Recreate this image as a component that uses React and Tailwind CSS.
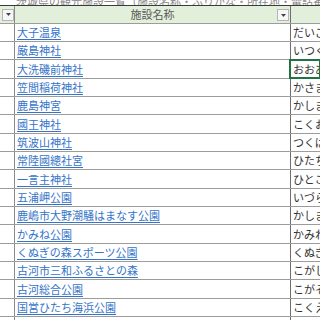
const facilities = [
  { name: '大子温泉', kana: 'だいごおんせん' },
  { name: '厳島神社', kana: 'いつくしまじんじゃ' },
  { name: '大洗磯前神社', kana: 'おおあらいいそさきじんじゃ', selected: true },
  { name: '笠間稲荷神社', kana: 'かさまいなりじんじゃ' },
  { name: '鹿島神宮', kana: 'かしまじんぐう' },
  { name: '國王神社', kana: 'こくおうじんじゃ' },
  { name: '筑波山神社', kana: 'つくばさんじんじゃ' },
  { name: '常陸國總社宮', kana: 'ひたちこくそうしゃぐう' },
  { name: '一言主神社', kana: 'ひとことぬしじんじゃ' },
  { name: '五浦岬公園', kana: 'いづらみさきこうえん' },
  { name: '鹿嶋市大野潮騒はまなす公園', kana: 'かしましおおのしおさいはまなすこうえん' },
  { name: 'かみね公園', kana: 'かみねこうえん' },
  { name: 'くぬぎの森スポーツ公園', kana: 'くぬぎのもりすぽーつこうえん' },
  { name: '古河市三和ふるさとの森', kana: 'こがしさんわふるさとのもり' },
  { name: '古河総合公園', kana: 'こがそうごうこうえん' },
  { name: '国営ひたち海浜公園', kana: 'こくえいひたちかいひんこうえん' },
  { name: '土浦市霞ケ浦総合公園', kana: 'つちうらしかすみがうらそうごうこうえん' },
];

const font = { fontFamily: '"Noto Sans CJK JP", "Noto Sans", sans-serif' };

function FilterButton() {
  return (
    <div className="flex h-[12px] w-[12px] items-center justify-center border border-[#b5b5b5] bg-[#f7f7f7]">
      <svg width="5" height="3" viewBox="0 0 5 3">
        <path d="M0 0h5L2.5 3z" fill="#444" />
      </svg>
    </div>
  );
}

function Row({ item, index }) {
  const tall = index % 3 === 2;
  return (
    <div className={`flex border-b border-[#9c9c9c] ${tall ? 'h-[19px]' : 'h-[18px]'}`}>
      <div className="w-[15px] shrink-0 border-r border-[#8a8a8a]" />
      <div className="flex w-[275px] shrink-0 items-center overflow-hidden whitespace-nowrap pl-[2px] text-[11px] text-[#3574c8] underline decoration-[#3574c8] underline-offset-2">
        {item.name}
      </div>
      <div
        className={`flex min-w-0 flex-1 items-center overflow-hidden whitespace-nowrap border-l border-[#6e6e6e] pl-[2px] text-[11px] text-[#333] ${
          item.selected ? 'outline outline-2 -outline-offset-1 outline-[#217346]' : ''
        }`}
      >
        {item.kana}
      </div>
    </div>
  );
}

export default function App() {
  return (
    <div className="h-[320px] w-[320px] overflow-hidden bg-white" style={font}>
      {/* title line, scrolled mostly out of view */}
      <div className="flex h-[5px] items-end overflow-hidden">
        <div className="-mb-[3px] whitespace-nowrap pl-[16px] text-[11px] leading-[13px] text-[#8a8a8a]">
          茨城県の観光施設一覧（施設名称・ふりがな・所在地・電話番号・ホームページ）
        </div>
      </div>
      <div className="h-px bg-[#3a3a3a]" />

      {/* header */}
      <div className="flex h-[18px] border-b border-[#9c9c9c] bg-[#e2efda]">
        <div className="flex w-[15px] shrink-0 items-center border-r border-[#8a8a8a] pl-[2px]">
          <FilterButton />
        </div>
        <div className="relative flex w-[275px] shrink-0 items-center justify-center text-[11px] text-[#5a5a5a]">
          施設名称
          <div className="absolute right-[1px] top-[3px]">
            <FilterButton />
          </div>
        </div>
        <div className="flex-1 border-l border-[#6e6e6e]" />
      </div>

      {facilities.map((item, i) => (
        <Row key={item.name} item={item} index={i} />
      ))}
    </div>
  );
}
